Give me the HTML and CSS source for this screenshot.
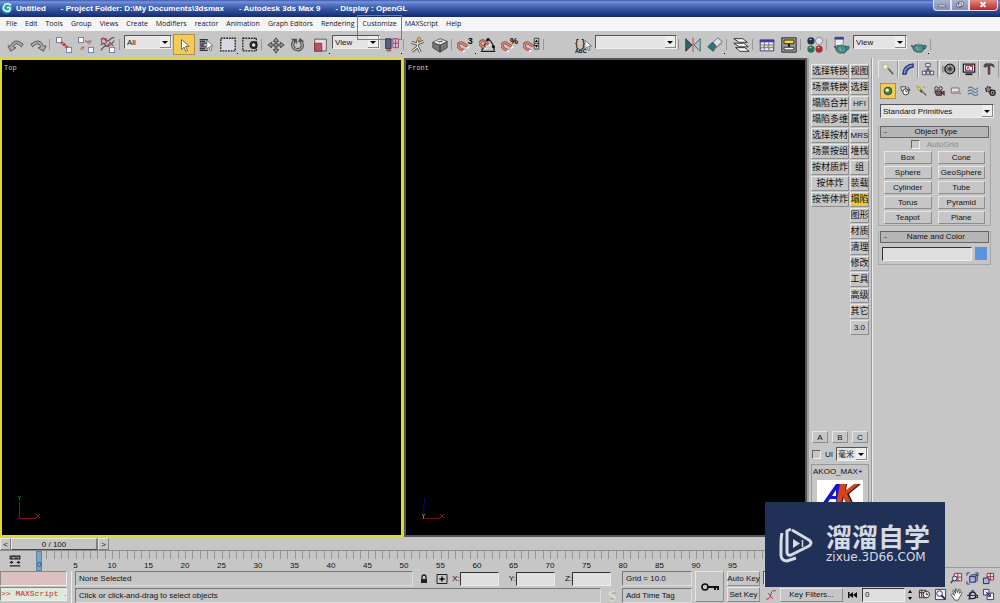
FILE: index.html
```html
<!DOCTYPE html>
<html lang="en">
<head>
<meta charset="utf-8">
<title>Untitled - Autodesk 3ds Max 9</title>
<link rel="stylesheet" href="styles.css">
</head>
<body>
<svg class="defs" aria-hidden="true">
  <defs>
    <symbol id="magnet" viewBox="0 0 20 20"><path d="M6 15 3 10Q1 4 6 3q4 0 5 5l2 5" transform="rotate(-35 8 9)" fill="none" stroke="#8b3a33" stroke-width="4"/><path d="M6 15 3 10Q1 4 6 3q4 0 5 5l2 5" transform="rotate(-35 8 9)" fill="none" stroke="#d98477" stroke-width="2.4"/><path d="m8 17 3-2M14 12l3-2" stroke="#fff" stroke-width="2"/></symbol>
    <symbol id="teapot" viewBox="0 0 20 14"><path d="M5 4h9q4 6-1 9H7Q3 12 2 7L0 5q3-1 4 2zM14 6q5-3 5 0t-4 4" fill="#4f8d8e" stroke="#244e52"/><path d="M7 3q3-3 6 0zM7 6q1 4 3 5" fill="#7db5b3" stroke="#a8d4d0" stroke-width=".7"/></symbol>
    <symbol id="pointer" viewBox="0 0 10 16"><path d="M1 1v12l3-3 2 5 2-1-2-5h4z" fill="#fff" stroke="#444" stroke-width=".9"/></symbol>
    <symbol id="sq" viewBox="0 0 7 7"><path d="M.5.5h6v6h-6z" fill="#fff" stroke="#555a8c"/></symbol>
  </defs>
</svg>

<header class="titlebar">
  <svg class="logo" viewBox="0 0 12 12"><circle cx="6" cy="6" r="5.5" fill="#2fa1a2"/><path d="M10 3Q5 0 3 4t2 5 4-2-3-1" fill="none" stroke="#e0ffff" stroke-width="1.5"/></svg>
  <h1 class="title"><span>Untitled</span><span>- Project Folder: D:\My Documents\3dsmax</span><span>- Autodesk 3ds Max 9</span><span>- Display : OpenGL</span></h1>
  <div class="winbtns">
    <button aria-label="Minimize"><svg viewBox="0 0 18 10"><path d="M5 5h8v2H5z" fill="#fff" stroke="#445" stroke-width=".7"/></svg></button>
    <button aria-label="Restore"><svg viewBox="0 0 18 10"><path d="M7.500 1.500h5v5h-5zM5.500 3.500h5v4h-5z" fill="#fff" stroke="#445" stroke-width=".8"/></svg></button>
    <button class="close" aria-label="Close"><svg viewBox="0 0 28 10"><path d="m11 2 5 5m0-5-5 5" stroke="#fff" stroke-width="2"/></svg></button>
  </div>
</header>

<nav class="menubar">
  <a href="#">File</a><a href="#">Edit</a><a href="#">Tools</a><a href="#">Group</a><a href="#">Views</a><a href="#">Create</a><a href="#">Modifiers</a><a href="#">reactor</a><a href="#">Animation</a><a href="#">Graph Editors</a><a href="#">Rendering</a><a href="#" class="marked">Customize</a><a href="#">MAXScript</a><a href="#">Help</a>
</nav>

<div class="toolbar">
  <button aria-label="Undo"><svg viewBox="0 0 20 20"><path d="M4 11Q8 1 18 9l-2 3Q9 5 7 12l3 1-6 4-3-6z" fill="#aaa" stroke="#444" stroke-width=".9"/></svg></button>
  <button aria-label="Redo"><svg viewBox="0 0 20 20"><path d="M16 11Q12 1 2 9l2 3q7-7 9 0l-3 1 6 4 3-6z" fill="#aaa" stroke="#444" stroke-width=".9"/></svg></button>
  <i class="sep"></i>
  <button aria-label="Select and Link"><svg viewBox="0 0 20 20"><path d="m6 6 9 8" stroke="#a33" stroke-width="3" stroke-dasharray="3 1"/><use href="#sq" x="1" y="1" width="7" height="7"/><use href="#sq" x="12" y="12" width="7" height="7"/></svg></button>
  <button aria-label="Unlink Selection"><svg viewBox="0 0 20 20"><path d="m9 5 3 2m2-2-3 3m5-3-3 4M5 12l3 3m-4 0 4-3" stroke="#c06058" stroke-width="1.200"/><use href="#sq" x="1" y="1" width="7" height="7"/><use href="#sq" x="12" y="12" width="7" height="7"/></svg></button>
  <button aria-label="Bind to Space Warp"><svg viewBox="0 0 20 20"><path d="M2 4q3-3 5 0t5 0 5-2M2 16q4-6 7-5t8-6M2 10q3-3 5 0t5 0" fill="none" stroke="#556" stroke-width="1.400"/><path d="M3 3h5v5H3zM9 12l3-5 4 4" fill="none" stroke="#b04050" stroke-width="1.200"/><use href="#sq" x="11" y="12" width="7" height="7"/></svg></button>
  <i class="sep"></i>
  <select class="combo w48" aria-label="Selection filter"><option>All</option></select>
  <button class="on" aria-label="Select Object"><svg viewBox="0 0 20 20"><use href="#pointer" x="6" y="3" width="10" height="15"/></svg></button>
  <button aria-label="Select by Name"><svg viewBox="0 0 20 20"><path d="M3 4h9M3 6h6M3 8h9M3 10h5M3 12h7M3 14h6M3 16h9" stroke="#333" stroke-width="1.400"/><use href="#pointer" x="10" y="4" width="8" height="13"/></svg></button>
  <button class="fly" aria-label="Selection Region"><svg viewBox="0 0 20 20"><path d="M2 2.500h16v14H2z" fill="#d8d8e4" stroke="#222" stroke-width="1.500" stroke-dasharray="2 1"/></svg></button>
  <button aria-label="Window/Crossing"><svg viewBox="0 0 20 20"><path d="M2 2.500h15v14H2z" fill="none" stroke="#222" stroke-width="1.500" stroke-dasharray="2 1"/><circle cx="14" cy="10" r="4.500" fill="#222"/><circle cx="14" cy="10" r="2" fill="#ddd"/></svg></button>
  <i class="sep"></i>
  <button aria-label="Select and Move"><svg viewBox="0 0 20 20"><path d="m10 2 3 4h-2v3h4V7l4 3-4 3v-2h-4v4h2l-3 4-3-4h2v-4H5v2l-4-3 4-3v2h4V6H7z" fill="#999" stroke="#333" stroke-width=".9"/></svg></button>
  <button aria-label="Select and Rotate"><svg viewBox="0 0 20 20"><path d="M6 5q-4 5 0 9 5 3 8-1 2-4-1-7" fill="none" stroke="#444" stroke-width="3.500"/><path d="M6 5q-4 5 0 9 5 3 8-1 2-4-1-7" fill="none" stroke="#aaa" stroke-width="1.500"/><path d="M2 3h7v6zM10 7l2-5 5 4z" fill="#555"/></svg></button>
  <button class="fly" aria-label="Select and Scale"><svg viewBox="0 0 20 20"><path d="M4 3.500h13v13H4z" fill="#e8dede" stroke="#555"/><path d="M4 8h8v9H4z" fill="#b9525a" stroke="#7a2a33" stroke-width=".8"/></svg></button>
  <select class="combo w48" aria-label="Reference coordinate system"><option>View</option></select>
  <button class="fly" aria-label="Use Pivot Point Center"><svg viewBox="0 0 20 20"><path d="M3 3h6v11H3z" fill="#526184" stroke="#334"/><path d="M11 3h6v10h-6zM11 8h6M14 3v10" fill="#d9c9dd" stroke="#9c3860"/><path d="M4 15h5v2H4z" fill="#b03a58"/></svg></button>
  <i class="sep"></i>
  <button aria-label="Select and Manipulate"><svg viewBox="0 0 20 20"><path d="M9.500 5v7M3 7l6 2 7-3M9.500 12l-6 5M9.500 12l3 6" fill="none" stroke="#444" stroke-width="3.200"/><path d="M9.500 5v7M3 7l6 2 7-3M9.500 12l-6 5M9.500 12l3 6" fill="none" stroke="#e9e4c8" stroke-width="1.500"/><circle cx="11" cy="3.500" r="2" fill="#e0b33a" stroke="#654" stroke-width=".6"/></svg></button>
  <button aria-label="Keyboard Shortcut Override"><svg viewBox="0 0 20 20"><path d="m2 7 8 3v8l-8-5zM10 10l8-4v7l-8 5z" fill="#777" stroke="#333" stroke-width=".8"/><path d="m2 7 8-4 8 3-8 4z" fill="#f4f4f4" stroke="#333" stroke-width=".8"/><path d="M7 6h6M9 8l3-3" stroke="#555"/></svg></button>
  <i class="sep"></i>
  <button class="fly" aria-label="Snaps Toggle"><svg viewBox="0 0 20 20"><use href="#magnet" x="0" y="4" width="16" height="16"/><text x="12" y="9" class="glyph">3</text></svg></button>
  <button aria-label="Angle Snap"><svg viewBox="0 0 20 20"><path d="M2 17h16M10 3q6 4 7 13M10 3 3 16" fill="none" stroke="#222" stroke-width="1.500"/><use href="#magnet" x="0" y="2" width="15" height="15"/><circle cx="10" cy="4" r="1.600"/><circle cx="16" cy="12" r="1.600"/></svg></button>
  <button aria-label="Percent Snap"><svg viewBox="0 0 20 20"><use href="#magnet" x="0" y="4" width="16" height="16"/><text x="10" y="9" class="glyph">%</text></svg></button>
  <button aria-label="Spinner Snap"><svg viewBox="0 0 20 20"><use href="#magnet" x="0" y="4" width="16" height="16"/><path d="M12.500 2.500h5v12h-5zM12 8.500h6" fill="#ddd" stroke="#333"/><path d="m13 7 2-3 2 3zM13 10l2 3 2-3z"/></svg></button>
  <i class="sep"></i>
  <button class="named" aria-label="Edit Named Selection Sets"><svg viewBox="0 0 20 20"><text x="1" y="12" class="brace">{ }</text><text x="1" y="19" class="tiny">ABC</text><use href="#pointer" x="11" y="4" width="9" height="13"/></svg></button>
  <select class="combo w82" aria-label="Named selection sets"><option></option></select>
  <i class="sep"></i>
  <button aria-label="Mirror"><svg viewBox="0 0 20 20"><path d="M2 3v14l7-7z" fill="#35666c" stroke="#234"/><path d="M18 3v14l-7-7z" fill="#a9c3c6" stroke="#456"/><path d="M10 2v16" stroke="#c33"/></svg></button>
  <button class="fly" aria-label="Align"><svg viewBox="0 0 20 20"><path d="m2 12 5-5 5 5-4 5z" fill="#31737c" stroke="#234" stroke-width=".8"/><path d="m8 7 5-5 5 4-6 6z" fill="#dfe3e8" stroke="#456" stroke-width=".8"/><path d="m9 15 9-7" stroke="#c77"/></svg></button>
  <i class="sep"></i>
  <button aria-label="Layer Manager"><svg viewBox="0 0 20 20"><g fill="#fff" stroke="#222"><path d="M4 13h10l5 4H9z"/><path d="M2 8h11l5 4H8z"/><path d="M2 3h10l5 4H8z"/></g></svg></button>
  <i class="sep"></i>
  <button aria-label="Curve Editor"><svg viewBox="0 0 20 20"><path d="M2.500 4.500h15v12h-15z" fill="#f3f3ff" stroke="#336"/><path d="M2 4h16v3H2z" fill="#3c3cae"/><path d="M3 10h14M3 13h14M7 7v9M12 7v9" stroke="#667"/><path d="M3 15q5-7 8-3t6-3" fill="none" stroke="#c90"/></svg></button>
  <button aria-label="Schematic View"><svg viewBox="0 0 20 20"><path d="M2 2h16v16H2z" fill="#999" stroke="#222"/><path d="M10 8v4" stroke="#111" stroke-width="2"/><path d="M4.500 4.500h11v4h-11z" fill="#f4d92c" stroke="#222"/><path d="M4.500 12.500h11v3h-11z" fill="#fff" stroke="#222"/></svg></button>
  <i class="sep"></i>
  <button aria-label="Material Editor"><svg viewBox="0 0 20 20"><circle cx="5.500" cy="5.500" r="4" fill="#243248"/><circle cx="14.500" cy="5.500" r="4" fill="#dce0e4" stroke="#666" stroke-width=".7"/><circle cx="5.500" cy="14.500" r="4" fill="#23735c"/><circle cx="14.500" cy="14.500" r="4" fill="#aa2b31"/><path d="M4 4h2M4 13h2M13 13h2" stroke="#fff"/></svg></button>
  <i class="sep"></i>
  <button aria-label="Render Scene"><svg viewBox="0 0 20 20"><path d="M3.500 1.500h9v9h-9z" fill="#eee" stroke="#778"/><path d="M3 1h10v3H3z" fill="#3c3cae"/><use href="#teapot" x="2" y="7" width="18" height="13"/></svg></button>
  <select class="combo w54" aria-label="Render type"><option>View</option></select>
  <button class="fly" aria-label="Quick Render"><svg viewBox="0 0 20 20"><use href="#teapot" x="1" y="6" width="18" height="13"/></svg></button>
  <i class="sep"></i>
</div>

<main class="workspace">
  <section class="stage">
    <div class="views">
      <div class="view active"><span>Top</span>
        <svg class="axis" viewBox="0 0 28 28"><path d="M4.500 6v18" stroke="#164a1c"/><path d="M5 23.500h16" stroke="#8c0c1c"/><path d="M4 22v2" stroke="#22a"/><path d="m3 1 1.500 2L6 1M4.500 3v2" stroke="#1d7a2a" fill="none"/><path d="m21 19 4 4m0-4-4 4" stroke="#9c1020"/></svg></div>
      <div class="view"><span>Front</span>
        <svg class="axis" viewBox="0 0 28 28"><path d="M5.500 3 4.500 20" stroke="#0a0a8c"/><path d="M5 23.500h16" stroke="#700c14"/><path d="m3 19 1.500 2L6 19M4.500 21v3" stroke="#777" fill="none"/><path d="m21 19 4 4m0-4-4 4" stroke="#9c1020"/></svg></div>
    </div>
    <div class="timeslider"><button aria-label="Previous frame">&lt;</button><button class="thumb">0 / 100</button><button aria-label="Next frame">&gt;</button></div>
    <div class="track">
      <button aria-label="Open Mini Curve Editor"><svg viewBox="0 0 16 16"><path d="M2.500 2.500h11v3h-11zM2 13.500h12M4 8v3M12 8v3M2 9.500h4M10 9.500h4" fill="none" stroke="#222" stroke-width="1.300"/><path d="m3 5 4-3 2 3 4-3" fill="none" stroke="#222"/></svg></button>
      <div class="ruler"><span class="now">0</span><span>5</span><span>10</span><span>15</span><span>20</span><span>25</span><span>30</span><span>35</span><span>40</span><span>45</span><span>50</span><span>55</span><span>60</span><span>65</span><span>70</span><span>75</span><span>80</span><span>85</span><span>90</span><span>95</span></div>
    </div>
  </section>

  <aside class="plugin">
    <div class="plugcols">
      <div class="col wide"><button>选择转换</button><button>场景转换</button><button>塌陷合并</button><button>塌陷多维</button><button>选择按材</button><button>场景按组</button><button>按材质炸</button><button>按体炸</button><button>按等体炸</button></div>
      <div class="col"><button>视图</button><button>选择</button><button class="latin">HFI</button><button>属性</button><button class="latin">MRS</button><button>堆栈</button><button>组</button><button>装载</button><button class="on">塌陷</button><button>图形</button><button>材质</button><button>清理</button><button>修改</button><button>工具</button><button>高级</button><button>其它</button><button class="latin">3.0</button></div>
    </div>
    <div class="abc"><button>A</button><button>B</button><button>C</button></div>
    <div class="unit"><label><input type="checkbox" class="tick">UI</label><select class="combo" aria-label="Unit"><option>毫米</option></select></div>
    <div class="akoo"><span>AKOO_MAX+</span>
      <svg viewBox="0 0 46 40"><path d="M0 0h46v40H0z" fill="#fff"/><path d="m5 24 14-20h5v20h-5v-5h-6l-3 5zm10-8h4v-6z" fill="#1616c8"/><path d="M25 4h5l-1 7 9-7h6L32 14l5 11h-6l-4-8-2 8h-5z" fill="#222"/><path d="M23 4h6l-1 7 9-7h5L30 14l5 10h-6l-3-8-2 8h-5z" fill="#d8431c"/></svg></div>
  </aside>

  <aside class="command">
    <div class="tabs">
      <button class="on" aria-label="Create"><svg viewBox="0 0 16 16"><path d="m7 6 7 8" stroke="#665" stroke-width="2"/><path d="m5 1 1 3 3-1-2 3 2 2-3-1-1 3-1-3-3 1 2-3-2-2 3 1z" fill="#fffbd0" stroke="#997" stroke-width=".5"/></svg></button>
      <button aria-label="Modify"><svg viewBox="0 0 16 16"><path d="M2 14Q2 3 14 2v4Q7 7 6 14z" fill="#3455a0" stroke="#1c2c5c"/><path d="M4 13Q4 5 13 4" fill="none" stroke="#a8c0f0"/></svg></button>
      <button aria-label="Hierarchy"><svg viewBox="0 0 16 16"><path d="M8 4v4L4 11M8 8l4 3M8 8v3" stroke="#334" fill="none"/><path d="M5.500 1.500h5v4h-5zM1.500 10.500h4v4h-4zM10.500 10.500h4v4h-4zM6.500 10.500h3v4h-3z" fill="#e8e8f8" stroke="#446"/></svg></button>
      <button aria-label="Motion"><svg viewBox="0 0 16 16"><circle cx="9" cy="8" r="5.500" fill="#aaa" stroke="#222" stroke-width="1.500"/><circle cx="9" cy="8" r="2" fill="#222"/><path d="M9 3v10M4 8h10M5 5l7 6M12 5l-7 6M1 4v8M3 5v6" stroke="#444" stroke-width=".8"/></svg></button>
      <button aria-label="Display"><svg viewBox="0 0 16 16"><path d="M1.500 2.500h13v9h-13z" fill="#ddd" stroke="#222" stroke-width="1.400"/><path d="M4 4h8v6H4z" fill="#fff" stroke="#339"/><path d="m5 10 2-5 2 5m0-5h3v3" stroke="#c22" fill="none"/><path d="M4 14h8" stroke="#222" stroke-width="2"/></svg></button>
      <button aria-label="Utilities"><svg viewBox="0 0 16 16"><path d="M2 5q1-4 4-3h4q4 0 4 4l-3-2H9v10H7V4L4 6z" fill="#555" stroke="#222" stroke-width=".7"/><path d="M8 8v6" stroke="#b33"/></svg></button>
    </div>
    <div class="cats">
      <button class="on" aria-label="Geometry"><svg viewBox="0 0 14 14"><circle cx="7" cy="7" r="4.500" fill="#3f8a3a" stroke="#333"/><circle cx="6" cy="6" r="2" fill="#e8ffe0"/></svg></button>
      <button aria-label="Shapes"><svg viewBox="0 0 14 14"><path d="M2 2h6l-1 5H3z" fill="#ddd" stroke="#444"/><circle cx="8" cy="8" r="3.500" fill="#fff" stroke="#222"/><path d="M8 6v2h2M10 2l3 4h-4" stroke="#333" fill="none"/></svg></button>
      <button aria-label="Lights"><svg viewBox="0 0 14 14"><path d="m4 4 8 8M3 5l4 4" stroke="#444" stroke-width="1.300"/><path d="m1 1 5 3-2 3zM8 3l3-1M7 6l2 4" fill="#f5e458" stroke="#a89a22"/></svg></button>
      <button aria-label="Cameras"><svg viewBox="0 0 14 14"><circle cx="4" cy="4" r="2" fill="#ccc" stroke="#222"/><circle cx="9" cy="4" r="2" fill="#ccc" stroke="#222"/><path d="M2 7h8v5H4zM10 9l3-2v5z" fill="#666" stroke="#222"/><path d="M6 9h3" stroke="#c33"/></svg></button>
      <button aria-label="Helpers"><svg viewBox="0 0 14 14"><path d="M1.500 3.500h9v6h-9z" fill="#e8e8e8" stroke="#666"/><path d="M3 8h7M12 9v2" stroke="#c44"/></svg></button>
      <button aria-label="Space Warps"><svg viewBox="0 0 14 14"><path d="M1 4q3-3 6 0t6-1M1 7.500q3-3 6 0t6-1M1 11q3-3 6 0t6-1" fill="none" stroke="#5578a0" stroke-width="1.300"/></svg></button>
      <button aria-label="Systems"><svg viewBox="0 0 14 14"><circle cx="5" cy="5" r="3" fill="#888" stroke="#222" stroke-width="1.500" stroke-dasharray="2 1"/><circle cx="10" cy="9" r="3" fill="#aaa" stroke="#222" stroke-width="1.500"/><circle cx="10" cy="9" r="1"/></svg></button>
    </div>
    <select class="combo prim" aria-label="Category"><option>Standard Primitives</option></select>
    <section class="rollout">
      <h2><i>-</i>Object Type</h2>
      <label class="auto"><input type="checkbox" class="tick" disabled>AutoGrid</label>
      <div class="types"><button>Box</button><button>Cone</button><button>Sphere</button><button>GeoSphere</button><button>Cylinder</button><button>Tube</button><button>Torus</button><button>Pyramid</button><button>Teapot</button><button>Plane</button></div>
    </section>
    <section class="rollout">
      <h2><i>-</i>Name and Color</h2>
      <div class="name"><input type="text" aria-label="Object name"><button class="swatch" aria-label="Object color"></button></div>
    </section>
  </aside>
</main>

<footer class="status">
  <div class="listener"><div class="macro"></div><div class="script">&gt;&gt; MAXScript .</div></div>
  <div class="info">
    <div class="line coords">
      <output class="well">None Selected</output>
      <button aria-label="Lock selection"><svg viewBox="0 0 12 12"><path d="M4 6V4q0-2 2-2t2 2v2" fill="none" stroke="#222" stroke-width="1.300"/><path d="M3 6h6v4H3z" fill="#222"/></svg></button>
      <button aria-label="Absolute mode"><svg viewBox="0 0 12 12"><path d="M1 1.500h10v9H1z" fill="none" stroke="#222"/><path d="M6 3v6M3 6h6" stroke="#222"/><circle cx="6" cy="6" r="1.500"/></svg></button>
      <label>X:<input type="text"></label><label>Y:<input type="text"></label><label>Z:<input type="text"></label>
    </div>
    <div class="line"><output class="well">Click or click-and-drag to select objects</output>
      <button aria-label="Communication Center"><svg viewBox="0 0 12 12"><path d="M9 2H5L3 4l6 3-2 3H3" fill="none" stroke="#e4e0cc" stroke-width="1.500"/><path d="M10 3H6M8 9H4" stroke="#999"/></svg></button></div>
  </div>
  <div class="grid"><output class="well">Grid = 10.0</output><output class="well">Add Time Tag</output></div>
  <button class="raised key" aria-label="Set Keys"><svg viewBox="0 0 20 12"><circle cx="5" cy="6" r="3" fill="none" stroke="#111" stroke-width="1.600"/><path d="M8 6h10v3M15 6v3" fill="none" stroke="#111" stroke-width="2"/></svg></button>
  <div class="keys"><button class="raised">Auto Key</button><button class="raised">Set Key</button></div>
  <div class="anim">
    <select class="combo" aria-label="Key selection set"><option></option></select>
    <div class="line">
      <button aria-label="Default tangents"><svg viewBox="0 0 12 12"><path d="M1 10h2Q5 10 6 5t5-3M3 4l5 6" fill="none" stroke="#b33a44"/></svg></button>
      <button class="raised filters">Key Filters...</button>
      <button aria-label="Go to start"><svg viewBox="0 0 12 12"><path d="M1 3h1.500v6H1zM2 6l4-3v6zM6 6l4-3v6z" fill="#111"/></svg></button>
      <input type="text" class="frame" value="0" aria-label="Current frame">
      <svg class="spin" viewBox="0 0 6 12"><path d="m1 4 2-3 2 3zM1 8l2 3 2-3z"/></svg>
    </div>
  </div>
  <div class="nav">
    <button aria-label="Key mode"></button>
    <button aria-label="Zoom"></button>
    <button aria-label="Zoom All"><svg viewBox="0 0 14 14"><path d="M4.500 1.500h8v8h-8zM4 5.500h9M8.500 1v9" fill="#edd" stroke="#8c3040"/><circle cx="5" cy="7" r="2.500" fill="#dde" stroke="#334"/><path d="m3 9-2 3" stroke="#334" stroke-width="1.500"/></svg></button>
    <button aria-label="Zoom Extents"><svg viewBox="0 0 14 14"><path d="M4 5h6v6H4zM4 5l2-2h6l-2 2M12 3v6l-2 2" fill="#aab6e0" stroke="#225"/><path d="M1 4V1h3M10 1h3v3M1 10v3h3" fill="none" stroke="#336"/></svg></button>
    <button aria-label="Zoom Extents All"><svg viewBox="0 0 14 14"><path d="M5.500 1.500h7v7h-7zM5 5h8M9 1v8" fill="#edd" stroke="#8c3040"/><path d="M1.500 6.500h6v6h-6z" fill="#aab6e0" stroke="#225"/></svg></button>
    <button aria-label="Time Configuration"><svg viewBox="0 0 14 14"><path d="M1.500 2.500h7v8h-7zM1 5h8M4 2v8" fill="#ddd" stroke="#522"/><circle cx="9" cy="7" r="3.500" fill="#eee" stroke="#222"/><path d="M9 5v2h2" stroke="#222" fill="none"/></svg></button>
    <button aria-label="Zoom Region"><svg viewBox="0 0 14 14"><path d="M1.500 1.500h11v11h-11z" fill="#eef" stroke="#336"/><circle cx="6" cy="6" r="3" fill="#fff" stroke="#225"/><path d="m8 8 4 4" stroke="#225" stroke-width="2"/></svg></button>
    <button aria-label="Pan"><svg viewBox="0 0 14 14"><path d="M5 13 1 7l1-1 3 2-2-5 1-1 2 4V1h1l1 4 2-4 1 1-1 4 2-2 1 1-3 6-1 2z" fill="#fff" stroke="#333" stroke-width=".8"/></svg></button>
    <button aria-label="Arc Rotate"><svg viewBox="0 0 14 14"><path d="M7 2 3 12l10-2z" fill="#ccd" stroke="#224"/><circle cx="7" cy="8" r="3.500" fill="none" stroke="#224" stroke-width="1.300"/><path d="M1 8h12" stroke="#224"/></svg></button>
    <button aria-label="Maximize Viewport"><svg viewBox="0 0 14 14"><path d="M1.500 1.500h6v6h-6zM5.500 5.500h7v7h-7z" fill="#eef" stroke="#336"/><path d="m4 4 5 5m0-3v3H6" stroke="#225" fill="none"/></svg></button>
  </div>
</footer>

<div class="watermark">
  <svg viewBox="0 0 36 36"><path d="M11 3 7 5v21q0 4 4 3l18-9q4-3 0-6L12 4" transform="translate(1 -1)" fill="none" stroke="#d6dae2" stroke-width="3" stroke-linejoin="round"/><path d="M3 6q-1 4-1 13v10q1 5 6 5l9-3" fill="none" stroke="#d6dae2" stroke-width="3"/><path d="M14 12v9l7-4.500z" fill="#d6dae2"/><path d="M23.500 13v7" stroke="#d6dae2" stroke-width="1.500"/></svg>
  <div><strong>溜溜自学</strong><span>zixue.3D66.COM</span></div>
</div>
</body>
</html>
```
FILE: styles.css
```css
* { box-sizing: border-box; }
:root {
  --face: #c6c6c6;
  --light: #e6e6e6;
  --dark: #808080;
  --ui: "Liberation Sans", "Noto Sans CJK SC", sans-serif;
}
body {
  position: relative;
  display: flex;
  flex-direction: column;
  min-height: 100vh;
  margin: 0;
  background: var(--face);
  color: #111;
  font: 8px/11px var(--ui);
}
button, input, select, output { font: inherit; color: inherit; }
button {
  display: flex;
  align-items: center;
  justify-content: center;
  padding: 0;
  border: 0;
  background: none;
  white-space: nowrap;
}
svg { display: block; }
.defs { position: absolute; width: 0; height: 0; }

.titlebar {
  display: flex;
  height: 17px;
  padding-left: 1px;
  background: linear-gradient(#3c5cae 0, #7b93dc 2px, #5878c8 4px, #3655a5 9px, #1f3a86 14px, #142a66 17px);
}
.logo { width: 12px; height: 12px; margin: 2px 3px 0 0; }
.title {
  display: flex;
  flex: 1;
  gap: 15px;
  margin: 0;
  color: #fff;
  font: bold 8px/17px "Liberation Sans", sans-serif;
  white-space: nowrap;
}
.winbtns { display: flex; height: 11px; padding-right: 2px; }
.winbtns button {
  width: 18px;
  border: 1px solid #dfe5f5;
  border-top: 0;
  background: linear-gradient(#a9b4cf, #7f8fb8);
}
.winbtns button:first-child { border-radius: 0 0 0 4px; }
.winbtns .close { width: 29px; border-radius: 0 0 4px 0; background: linear-gradient(#e08a80, #c2262a); }
.winbtns svg { width: 100%; height: 10px; }

.menubar {
  display: flex;
  gap: 8px;
  height: 14px;
  padding-left: 6px;
  background: #f5f5f7;
  font: 7px/14px "Open Sans", "Noto Sans", sans-serif;
}
.menubar a { color: #111; text-decoration: none; }
.marked { position: relative; }
.marked::after {
  content: "";
  position: absolute;
  inset: -2px -5px -9px;
  border: 1px solid #e0505c;
}

.toolbar {
  display: flex;
  align-items: center;
  height: 27px;
  padding-left: 5px;
}
.toolbar button { position: relative; width: 22px; height: 21px; }
.toolbar svg { width: 18px; height: 18px; }
.toolbar .on { background: #f2cc57; outline: 1px solid #b09040; outline-offset: -1px; }
.toolbar .named { margin-left: 25px; }
.toolbar .fly::after {
  content: "";
  position: absolute;
  right: 1px;
  bottom: 1px;
  width: 1px;
  height: 1px;
  background: #000;
}
.sep { width: 4px; height: 11px; border-left: 1px solid #999; }
.glyph { font: bold 10px "Liberation Sans", sans-serif; }
.brace { font: 12px "Liberation Sans", sans-serif; }
.tiny { font: bold 6px "Liberation Sans", sans-serif; }

.combo {
  appearance: none;
  height: 14px;
  padding: 0 12px 0 2px;
  border: 1px solid;
  border-color: #555 #eee #eee #555;
  border-radius: 0;
  background: #e4e4e4 url("data:image/svg+xml,%3Csvg xmlns='http://www.w3.org/2000/svg' width='11' height='12'%3E%3Cpath d='M0 0h11v12H0z' fill='%23888'/%3E%3Cpath d='M0 0h10v11H0z' fill='%23eee'/%3E%3Cpath d='M2 5h6L5 8z'/%3E%3C/svg%3E") no-repeat right center;
}
.toolbar .combo { align-self: flex-start; margin: 4px 1px 0; }
.w48 { width: 48px; }
.w54 { width: 54px; }
.w82 { width: 82px; }

.workspace { display: flex; flex: 1; }
.stage { display: flex; flex: 1; flex-direction: column; min-width: 0; }
.views { display: flex; flex: 1; gap: 1px; }
.view {
  display: flex;
  flex: 1;
  flex-direction: column;
  justify-content: space-between;
  padding: 3px 2px 12px;
  border: 2px solid #55565c;
  background: #000;
  color: #ccc;
  font: 7px/10px "Liberation Mono", monospace;
}
.view.active { border-color: #e2d92e; }
.axis { width: 28px; height: 28px; margin-left: 11px; }
.timeslider { display: flex; height: 13px; padding-top: 1px; }
.timeslider button { width: 11px; border: 1px solid; border-color: var(--light) var(--dark) var(--dark) var(--light); }
.timeslider .thumb { width: 87px; border-right-width: 2px; border-bottom-color: #444; }
.track { display: flex; height: 20px; border-top: 1px solid #8c8c8c; }
.track button { width: 30px; }
.track svg { width: 14px; height: 14px; }
.ruler {
  display: grid;
  flex: 1;
  grid-template-columns: repeat(20, 1fr);
  align-items: end;
  margin: 0 38px 0 9px;
  background: repeating-linear-gradient(90deg, #969696 0 1px, transparent 1px 1%) 0 0 / 100% 8px no-repeat;
}
.ruler span { justify-self: start; width: 20px; margin-left: -10px; text-align: center; }
.ruler .now { align-self: stretch; width: 6px; margin-left: -3px; padding-top: 7px; border: 1px solid #5685a8; background: #7fa5c1; color: #246; }

.plugin {
  display: flex;
  flex-direction: column;
  width: 65px;
  padding: 6px 2px 0;
  border-left: 2px solid #a0a0a0;
  border-right: 1px solid #999;
}
.plugcols { display: flex; flex: 1; align-items: flex-start; gap: 1px; }
.col { display: flex; flex: 1; flex-direction: column; gap: 1px; min-width: 0; font-size: 9px; }
.col.wide { flex: 0 0 38px; }
.col .latin { font-size: 8px; }
.col button, .abc button, .types button, .raised {
  height: 15px;
  border: 1px solid;
  border-color: var(--light) #8c8c8c #8c8c8c var(--light);
}
.col .on { background: #f0c832; }
.abc { display: flex; gap: 4px; padding: 0 1px; }
.abc button { flex: 1; height: 12px; }
.unit { display: flex; justify-content: space-between; margin: 4px 1px 3px; }
.unit label, .auto { display: flex; align-items: center; gap: 4px; }
.unit .combo { width: 32px; padding-left: 1px; }
.tick {
  appearance: none;
  width: 9px;
  height: 9px;
  margin: 0;
  border: 1px solid;
  border-color: #666 #eee #eee #666;
}
.akoo { height: 106px; padding: 1px; border: 1px solid #999; }
.akoo svg { width: 46px; height: 40px; margin: 3px 0 0 4px; }

.command {
  width: 128px;
  margin-bottom: 2px;
  padding: 2px 8px 0 5px;
  border-bottom: 1px solid #999;
  border-left: 1px solid #eee;
}
.tabs { display: flex; justify-content: space-between; height: 18px; margin-right: -7px; }
.tabs button { width: 20px; border: 1px solid; border-color: var(--light) #999 transparent var(--light); }
.tabs svg { width: 14px; height: 14px; }
.cats { display: flex; justify-content: space-between; height: 16px; margin: 5px -6px 5px 2px; }
.cats button { width: 16px; }
.cats .on { background: #f2cc57; outline: 1px solid #a89050; outline-offset: -1px; }
.cats svg { width: 12px; height: 12px; }
.prim { width: 100%; margin-left: 2px; }
.rollout {
  margin: 8px 1px 5px 0;
  padding: 0 1px 1px;
  border: 1px solid #a6a6a6;
  border-top: 0;
}
.rollout + .rollout { margin-top: 0; }
.rollout h2 {
  display: flex;
  justify-content: center;
  margin: 0;
  border: 1px solid #666;
  background: #b5b5b5;
  font: 8px/10px var(--ui);
}
.rollout h2 i { flex: 0 0 0; margin-right: auto; padding-left: 3px; font-style: normal; }
.rollout h2::after { content: ""; margin-left: auto; width: 3px; }
.auto { justify-content: center; gap: 7px; height: 13px; color: #8b8b8b; }
.types { display: grid; grid-template-columns: 1fr 1fr; gap: 2px 6px; padding: 0 4px; }
.types button { height: 13px; }
.name { display: flex; gap: 3px; padding: 4px 2px 2px; }
.name input { flex: 1; min-width: 0; height: 14px; padding: 0 2px; }
.name input, .line input { border: 1px solid; border-color: #333 #eee #eee #333; background: #dedede; }
.swatch { width: 12px; height: 13px; background: #5b93de; }

.status { display: flex; gap: 3px; height: 33px; padding: 1px 4px 0 0; }
.listener { width: 72px; padding-right: 4px; border-right: 1px solid #eee; font: 8px/12px "Liberation Mono", monospace; white-space: nowrap; }
.macro, .script { height: 15px; border: 1px solid; border-color: #888 #eee #eee #888; background: #dcc0c0; }
.script { height: 14px; margin-top: 1px; background: #dcebdc; color: #d02a2a; overflow: hidden; }
.info { display: flex; flex: 1; flex-direction: column; gap: 2px; }
.line { display: flex; align-items: center; gap: 3px; height: 15px; }
.coords { padding-right: 8px; }
.well { flex: 1; height: 15px; padding-left: 3px; border: 1px solid; border-color: #777 #ddd #ddd #777; line-height: 14px; white-space: nowrap; }
.line button { width: 15px; }
.line svg { width: 12px; height: 12px; }
.line label { display: flex; align-items: center; }
.line label + label { margin-left: 7px; }
.line input { width: 39px; height: 14px; padding: 0 2px; }
.grid { display: flex; flex-direction: column; gap: 2px; width: 70px; }
.key { width: 29px; height: 31px; }
.key svg { width: 20px; height: 12px; }
.keys { display: flex; flex-direction: column; gap: 1px; width: 33px; }
.anim { display: flex; flex-direction: column; gap: 2px; width: 150px; }
.anim .combo { width: 110px; }
.anim .line { gap: 2px; }
.anim .filters { width: 63px; height: 14px; }
.anim .frame { flex: 1; min-width: 0; }
.anim .spin { width: 6px; }
.nav { display: grid; grid-template-columns: repeat(5, 16px); grid-template-rows: 15px 15px; gap: 1px 0; }
.nav svg { width: 13px; height: 13px; }

.watermark {
  position: absolute;
  right: 55px;
  bottom: 16px;
  display: flex;
  align-items: center;
  gap: 11px;
  width: 180px;
  height: 85px;
  padding-left: 14px;
  background: #203056;
  color: #d6dae2;
}
.watermark svg { width: 36px; height: 36px; }
.watermark div { display: flex; flex-direction: column; padding-bottom: 4px; }
.watermark strong { font: bold 26px/28px "Noto Sans CJK SC", sans-serif; }
.watermark span { font: 12px/14px "DejaVu Sans", sans-serif; }
```
